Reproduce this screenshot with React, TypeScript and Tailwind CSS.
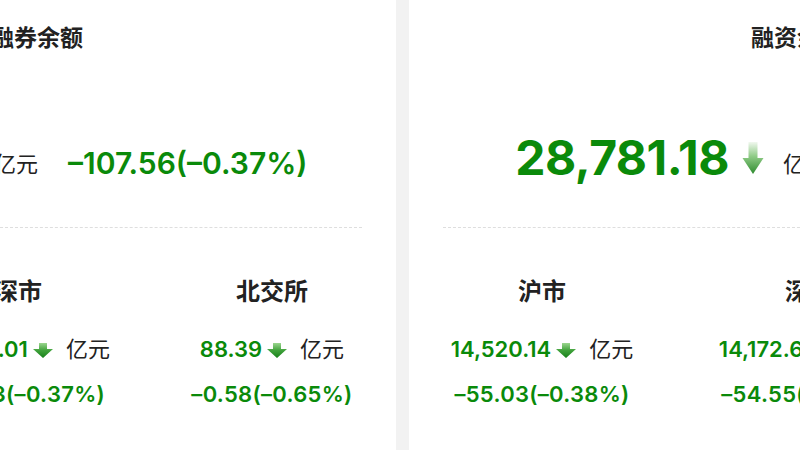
import React from "react"

type Market = { name: string; value: string; change: string }

type Board = {
  title: string
  total: string
  change: string
  markets: Market[]
  // per-card nudges for the heading, the total row and the market columns
  head: string
  totalRow: string
  marketRow: string
  col: string
}

const boards: Board[] = [
  {
    title: "融资融券余额",
    total: "28,985.64",
    change: "–107.56(–0.37%)",
    markets: [
      { name: "沪市", value: "14,629.24", change: "–54.05(–0.37%)" },
      { name: "深市", value: "14,268.01", change: "–52.93(–0.37%)" },
      { name: "北交所", value: "88.39", change: "–0.58(–0.65%)" },
    ],
    head: "",
    totalRow: "pr-[22px]",
    marketRow: "pl-[8px]",
    col: "w-[254px]",
  },
  {
    title: "融资余额",
    total: "28,781.18",
    change: "–110.16(–0.38%)",
    markets: [
      { name: "沪市", value: "14,520.14", change: "–55.03(–0.38%)" },
      { name: "深市", value: "14,172.65", change: "–54.55(–0.38%)" },
      { name: "北交所", value: "88.39", change: "–0.58(–0.65%)" },
    ],
    head: "pl-[12px]",
    totalRow: "pl-[22px]",
    marketRow: "pl-[36px]",
    col: "w-[267px]",
  },
]

function BigArrow() {
  return (
    <svg width="22" height="34" viewBox="0 0 22 34" className="shrink-0">
      <defs>
        <linearGradient id="big-down" x1="0" y1="0" x2="0" y2="1">
          <stop offset="0" stopColor="#f1f8ef" />
          <stop offset="0.45" stopColor="#8fcb86" />
          <stop offset="1" stopColor="#2e8b2e" />
        </linearGradient>
      </defs>
      <path d="M6.5 1H15.5V17H21.5L11 33L0.5 17H6.5Z" fill="url(#big-down)" />
    </svg>
  )
}

function SmallArrow() {
  return (
    <svg width="20" height="15" viewBox="0 0 20 15" className="shrink-0">
      <defs>
        <linearGradient id="small-down" x1="0" y1="0" x2="0" y2="1">
          <stop offset="0" stopColor="#9bd68f" />
          <stop offset="0.5" stopColor="#3fa13a" />
          <stop offset="1" stopColor="#17801a" />
        </linearGradient>
      </defs>
      <path d="M6 0H14V6H20L10 15L0 6H6Z" fill="url(#small-down)" />
    </svg>
  )
}

function MarketCol({ market, col }: { market: Market; col: string }) {
  return (
    <div className={`${col} flex shrink-0 flex-col items-center`}>
      <div className="text-[24px] font-bold leading-[32px] text-[#222]">
        {market.name}
      </div>
      <div className="mt-[26px] flex items-center">
        <span className="text-[22px] font-semibold leading-[30px] text-[#0a8a0a]">
          {market.value}
        </span>
        <span className="ml-[5px] mt-[2px]">
          <SmallArrow />
        </span>
        <span className="ml-[13px] text-[22px] leading-[30px] text-[#222]">
          亿元
        </span>
      </div>
      <div className="mt-[15px] text-[22px] font-semibold leading-[30px] tracking-[0.3px] text-[#0a8a0a]">
        {market.change}
      </div>
    </div>
  )
}

function BoardCard({ board }: { board: Board }) {
  return (
    <div className="flex w-[764px] shrink-0 flex-col items-center bg-white pt-[23px]">
      <h2
        className={`text-[23px] font-bold leading-[31px] text-[#222] ${board.head}`}
      >
        {board.title}
      </h2>
      <div className={`mt-[76px] flex items-center ${board.totalRow}`}>
        <span className="text-[48px] font-bold leading-[56px] tracking-[-0.5px] text-[#0a8a0a]">
          {board.total}
        </span>
        <span className="ml-[13px]">
          <BigArrow />
        </span>
        <span className="ml-[19px] mt-[12px] text-[22px] leading-[30px] text-[#222]">
          亿元
        </span>
        <span className="ml-[30px] mt-[10px] text-[30px] font-semibold leading-[36px] text-[#0a8a0a]">
          {board.change}
        </span>
      </div>
      <div className="mt-[41px] w-full px-[34px]">
        <div className="border-t border-dashed border-[#dedede]" />
      </div>
      <div className={`mt-[48px] flex w-full justify-center ${board.marketRow}`}>
        {board.markets.map((m) => (
          <MarketCol key={m.name} market={m} col={board.col} />
        ))}
      </div>
    </div>
  )
}

export default function App() {
  return (
    <div className="h-[450px] w-[800px] overflow-hidden bg-[#f2f2f2] font-['Inter','Noto_Sans_CJK_SC',sans-serif]">
      <div className="ml-[-368px] flex h-full gap-[13px]">
        {boards.map((b) => (
          <BoardCard key={b.title} board={b} />
        ))}
      </div>
    </div>
  )
}
